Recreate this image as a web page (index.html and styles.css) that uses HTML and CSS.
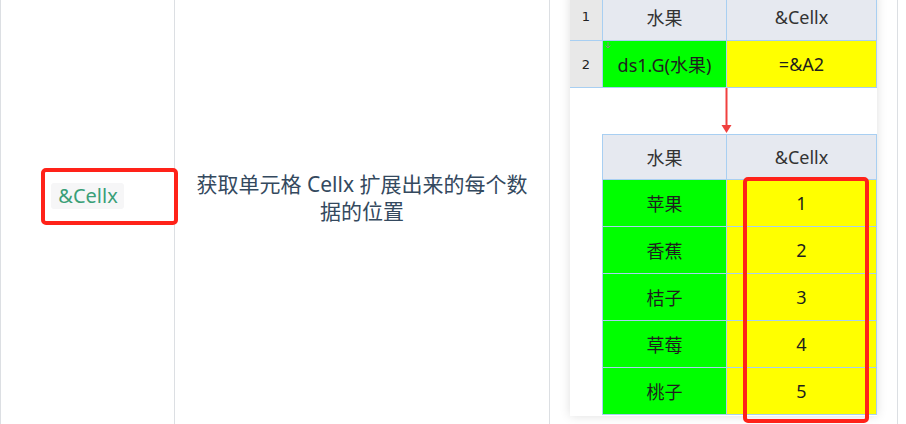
FILE: index.html
```html
<!DOCTYPE html>
<html lang="zh">
<head>
    <meta charset="UTF-8">
    <title>Cellx</title>
    <link rel="stylesheet" href="styles.css">
</head>
<body>
    <div class="table">
        <div class="cell cell-name">
            <span class="code-wrap">
                <code class="code">&amp;Cellx</code>
                <span class="mark mark-code"></span>
            </span>
        </div>
        <div class="cell cell-desc">
            <p class="desc">获取单元格 Cellx 扩展出来的每个数据的位置</p>
        </div>
        <div class="cell cell-demo">
            <div class="sheet">
                <div class="sheet-top">
                    <div class="num">1</div>
                    <div class="head">水果</div>
                    <div class="head">&amp;Cellx</div>
                    <div class="num">2</div>
                    <div class="green expand">
                        <svg class="expand-icon" width="6" height="7" viewBox="0 0 6 7"><path d="M3 0V6M0.5 3.5L3 6L5.5 3.5" stroke="#8a8a8a" stroke-width="1" fill="none"/></svg>
                        ds1.G(水果)
                    </div>
                    <div class="yellow">=&amp;A2</div>
                </div>
                <div class="gap">
                    <svg width="13" height="46" viewBox="0 0 13 46"><path d="M6.5 0V38" stroke="#f0403f" stroke-width="2"/><path d="M1.5 37L11.5 37L6.5 45Z" fill="#f0403f"/></svg>
                </div>
                <div class="sheet-result">
                    <div class="head">水果</div>
                    <div class="head">&amp;Cellx</div>
                    <div class="green">苹果</div>
                    <div class="yellow">1</div>
                    <div class="green">香蕉</div>
                    <div class="yellow">2</div>
                    <div class="green">桔子</div>
                    <div class="yellow">3</div>
                    <div class="green">草莓</div>
                    <div class="yellow">4</div>
                    <div class="green">桃子</div>
                    <div class="yellow">5</div>
                </div>
                <span class="mark mark-result"></span>
            </div>
        </div>
    </div>
</body>
</html>
```

FILE: styles.css
```css
body { margin: 0; background: #fff; overflow: hidden; font-family: "Noto Sans", "Noto Sans CJK SC", sans-serif; color: #2c3e50; }
.table { display: grid; grid-template-columns: 174px 375px 348px; grid-template-rows: 424px; height: 424px; border-left: 1px solid #dcdfe3; }
.cell { display: flex; align-items: center; justify-content: center; border-right: 1px solid #dcdfe3; box-sizing: border-box; min-height: 0; }
.cell-name { padding-bottom: 32px; }
.cell-desc { padding: 0 17px 28px; }
.cell-demo { align-items: flex-end; justify-content: flex-start; padding: 0 0 8px 20px; }

.code-wrap { position: relative; display: inline-block; }
.code { display: inline-block; font-family: "Noto Sans", sans-serif; font-size: 20px; line-height: 26px; padding: 0 6px 0 7px; background: #f6f6f7; color: #3a9f77; border-radius: 3px; }
.desc { margin: 0; font-size: 21px; line-height: 27px; text-align: center; color: #34495e; }

.mark { position: absolute; box-sizing: border-box; border: 4px solid #ff2219; border-radius: 5px; }
.mark-code { left: -10px; top: -15px; width: 137px; height: 57px; }
.mark-result { left: 173px; top: 184px; width: 126px; height: 246px; }

.sheet { position: relative; width: 307px; height: 423px; background: #fff; box-shadow: 0 0 10px rgba(0,0,0,0.13); flex-shrink: 0; font-size: 18px; color: #1e1e1e; }
.sheet-top { display: grid; grid-template-columns: 32px 123px 149px; grid-template-rows: 47px 46px; gap: 1px; background: #a8cff2; border-right: 1px solid #a8cff2; border-bottom: 1px solid #a8cff2; }
.sheet-top > div, .sheet-result > div { display: flex; align-items: center; justify-content: center; }
.num { background: #e8e8e8; font-family: "DejaVu Sans", sans-serif; font-size: 13px; color: #222; }
.head { background: #e6e9f0; color: #333; }
.green { background: #00ff00; }
.yellow { background: #ffff00; }
.expand { position: relative; }
.expand-icon { position: absolute; left: 2px; top: 1px; }
.gap { height: 46px; padding-left: 150px; }
.gap svg { display: block; }
.sheet-result { display: grid; grid-template-columns: 123px 149px; grid-template-rows: 44px repeat(5, 46px); gap: 1px; margin-left: 32px; background: #a8cff2; border: 1px solid #a8cff2; }
```
